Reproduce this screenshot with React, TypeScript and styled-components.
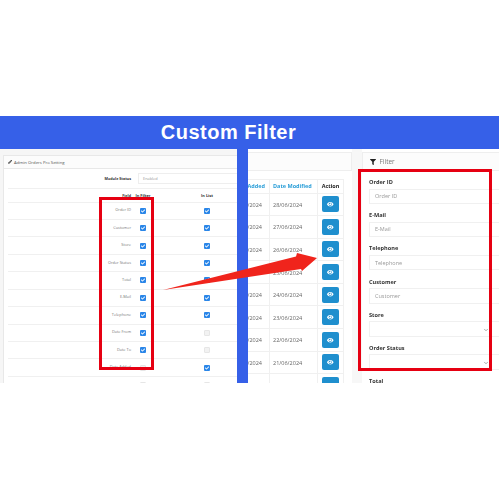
import React from "react";
import styled, { createGlobalStyle } from "styled-components";
import { FaEye, FaFilter, FaPencilAlt, FaCheck } from "react-icons/fa";
import { FiChevronDown } from "react-icons/fi";

const Global = createGlobalStyle`
  html, body { margin: 0; padding: 0; background: #fff; }
  body { font-family: "Open Sans", "Liberation Sans", sans-serif; }
`;

const Page = styled.div`
  width: 499px;
  height: 500px;
  padding-top: 116px;
  box-sizing: border-box;
  overflow: hidden;
  display: flex;
  flex-direction: column;
`;

const Banner = styled.div`
  height: 33px;
  flex: none;
  background: #3660e8;
  color: #fff;
  font: 700 20px/32px "Liberation Sans", Arial, sans-serif;
  letter-spacing: 0.5px;
  text-align: center;
  padding-right: 42px;
  box-sizing: border-box;
`;

const Stage = styled.div`
  position: relative;
  height: 234px;
  flex: none;
  display: flex;
  overflow: hidden;
  background: #fff;
`;

const Blurred = styled.div`
  display: flex;
  width: 100%;
  filter: blur(0.35px);
`;

const LeftColumn = styled.section`
  width: 237px;
  flex: none;
  box-sizing: border-box;
  padding: 5.5px 0 0 3px;
  background: #f6f6f6;
`;

const Panel = styled.div`
  background: #fff;
  border: 1px solid #e8e8e8;
  border-bottom: 0;
  border-right: 0;
  height: 100%;
`;

const PanelHead = styled.div`
  height: 13px;
  box-sizing: border-box;
  display: flex;
  align-items: center;
  gap: 2px;
  padding-left: 4px;
  font-size: 4.25px;
  color: #555;
  background: #fcfcfc;
  border-bottom: 1px solid #e8e8e8;
  svg { width: 4px; height: 4px; color: #333; }
`;

const SettingRow = styled.div`
  height: 17.45px;
  box-sizing: border-box;
  display: grid;
  grid-template-columns: 123px 24px 40px 24px;
  align-items: center;
  margin-left: 4px;
  border-bottom: 1px solid #f0f0f0;
  font-size: 3.9px;
  color: #777;
`;

const StatusRow = styled(SettingRow)`
  height: 20px;
  grid-template-columns: 123px 1fr;
  column-gap: 7px;
`;

const HeadRow = styled(SettingRow)`
  height: 14px;
  color: #333;
  font-weight: 700;
`;

const FieldLabel = styled.span`
  text-align: right;
  white-space: nowrap;
  transform: translateY(-1.5px);
`;

const StrongLabel = styled(FieldLabel)`
  font-weight: 700;
  font-size: 3.7px;
  color: #333;
  transform: none;
`;

const StatusBox = styled.div`
  height: 11px;
  box-sizing: border-box;
  border: 1px solid #eee;
  border-right: 0;
  padding-left: 4px;
  line-height: 9px;
  color: #999;
`;

const CheckCell = styled.div<{ $col: number }>`
  grid-column: ${(p) => p.$col};
  justify-self: center;
  white-space: nowrap;
`;

const Box = styled.span<{ $on: boolean }>`
  display: flex;
  align-items: center;
  justify-content: center;
  width: 6px;
  height: 6px;
  border-radius: 1px;
  background: ${(p) => (p.$on ? "#2a86e8" : "#f2f2f2")};
  border: ${(p) => (p.$on ? "0" : "0.5px solid #e6e6e6")};
  box-sizing: border-box;
  color: #fff;
  svg { width: 4px; height: 4px; }
`;

const Divider = styled.div`
  width: 11px;
  flex: none;
  background: #3660e8;
`;

const MiddleColumn = styled.section`
  width: 104px;
  flex: none;
  box-sizing: border-box;
  padding-top: 3px;
`;

const TableHead = styled.div`
  height: 19px;
  background: #fcfcfc;
  border: 1px solid #eeeeee;
  border-left: 0;
  box-sizing: border-box;
`;

const Table = styled.div`
  margin-top: 7.5px;
  width: 96px;
  display: grid;
  grid-template-columns: 22px 48px 26px;
`;

const Cell = styled.div<{ $tall?: boolean }>`
  height: ${(p) => (p.$tall ? "15px" : "22.6px")};
  box-sizing: border-box;
  display: flex;
  align-items: center;
  justify-content: flex-end;
  overflow: hidden;
  white-space: nowrap;
  font-size: 5.5px;
  color: #666;
  padding-right: 7px;
  padding-top: 1px;
  border-bottom: 1px solid #f0f0f0;
  border-right: 1px solid #f0f0f0;
  border-top: ${(p) => (p.$tall ? "1px solid #f0f0f0" : "0")};
`;

const DateCell = styled(Cell)`
  justify-content: flex-start;
  padding: 1px 0 0 3px;
`;

const HeadLink = styled(DateCell)`
  color: #2a9ed8;
  font-weight: 700;
  padding-top: 0;
`;

const ClipHead = styled(Cell)`
  color: #2a9ed8;
  font-weight: 700;
  padding: 0 4px 0 0;
`;

const ActionHead = styled(Cell)`
  justify-content: center;
  color: #222;
  font-weight: 700;
  padding: 0;
`;

const ActionCell = styled(Cell)`
  justify-content: center;
  padding: 0;
`;

const EyeButton = styled.span`
  width: 17px;
  height: 16px;
  border-radius: 2px;
  background: #1f8fce;
  color: #fff;
  display: flex;
  align-items: center;
  justify-content: center;
  svg { width: 6.5px; height: 6.5px; }
`;

const Gutter = styled.div`
  width: 10px;
  flex: none;
  background: #f7f7f7;
`;

const FilterColumn = styled.section`
  flex: 1;
  min-width: 0;
  padding-top: 3px;
  background: #fff;
`;

const FilterHead = styled.div`
  height: 19px;
  display: flex;
  align-items: center;
  gap: 3.5px;
  padding-left: 7px;
  font-size: 6.5px;
  color: #777;
  background: #fcfcfc;
  border: 1px solid #eee;
  border-right: 0;
  box-sizing: border-box;
  svg { width: 6px; height: 6px; color: #222; }
`;

const FilterBody = styled.div`
  padding: 7px 0 0 7px;
  display: flex;
  flex-direction: column;
`;

const FilterField = styled.div`
  height: 33.2px;
  flex: none;
`;

const FieldName = styled.div`
  font-size: 5.6px;
  line-height: 8px;
  height: 10.5px;
  font-weight: 700;
  color: #333;
`;

const FakeInput = styled.div`
  height: 15.5px;
  box-sizing: border-box;
  border: 1px solid #f0f0f0;
  border-right: 0;
  padding-left: 5px;
  font-size: 5.5px;
  color: #999;
  display: flex;
  align-items: center;
  justify-content: space-between;
  svg { width: 6px; height: 6px; color: #555; margin-right: 10px; margin-top: 2px; }
`;

const RedFrame = styled.div<{ $l: number; $t: number; $w: number; $h: number }>`
  position: absolute;
  left: ${(p) => p.$l}px;
  top: ${(p) => p.$t}px;
  width: ${(p) => p.$w}px;
  height: ${(p) => p.$h}px;
  box-sizing: border-box;
  border: 3px solid #e60012;
`;

const Arrow = styled.svg`
  position: absolute;
  left: 0;
  top: 0;
  width: 499px;
  height: 234px;
  pointer-events: none;
`;

const fields: [string, boolean, boolean][] = [
  ["Order ID", true, true],
  ["Customer", true, true],
  ["Store", true, true],
  ["Order Status", true, true],
  ["Total", true, true],
  ["E-Mail", true, true],
  ["Telephone", true, true],
  ["Date From", true, false],
  ["Date To", true, false],
  ["Date Added", false, true],
  ["Date Modified", false, false],
];

const dates = ["28", "27", "26", "25", "24", "23", "22", "21", "20"];

const filters: [string, boolean][] = [
  ["Order ID", false],
  ["E-Mail", false],
  ["Telephone", false],
  ["Customer", false],
  ["Store", true],
  ["Order Status", true],
  ["Total", false],
];

export default function App() {
  return (
    <Page>
      <Global />
      <Banner>Custom Filter</Banner>
      <Stage>
        <Blurred>
          <LeftColumn>
            <Panel>
              <PanelHead>
                <FaPencilAlt />
                Admin Orders Pro Setting
              </PanelHead>
              <StatusRow>
                <StrongLabel>Module Status</StrongLabel>
                <StatusBox>Enabled</StatusBox>
              </StatusRow>
              <HeadRow>
                <StrongLabel>Field</StrongLabel>
                <CheckCell $col={2}>In Filter</CheckCell>
                <CheckCell $col={4}>In List</CheckCell>
              </HeadRow>
              {fields.map(([name, inFilter, inList]) => (
                <SettingRow key={name}>
                  <FieldLabel>{name}</FieldLabel>
                  <CheckCell $col={2}>
                    <Box $on={inFilter}>{inFilter && <FaCheck />}</Box>
                  </CheckCell>
                  <CheckCell $col={4}>
                    <Box $on={inList}>{inList && <FaCheck />}</Box>
                  </CheckCell>
                </SettingRow>
              ))}
            </Panel>
          </LeftColumn>
          <Divider />
          <MiddleColumn>
            <TableHead />
            <Table>
              <ClipHead $tall>Date Added</ClipHead>
              <HeadLink $tall>Date Modified</HeadLink>
              <ActionHead $tall>Action</ActionHead>
              {dates.map((d) => (
                <React.Fragment key={d}>
                  <Cell>{d}/06/2024</Cell>
                  <DateCell>{d}/06/2024</DateCell>
                  <ActionCell>
                    <EyeButton>
                      <FaEye />
                    </EyeButton>
                  </ActionCell>
                </React.Fragment>
              ))}
            </Table>
          </MiddleColumn>
          <Gutter />
          <FilterColumn>
            <FilterHead>
              <FaFilter />
              Filter
            </FilterHead>
            <FilterBody>
              {filters.map(([name, select]) => (
                <FilterField key={name}>
                  <FieldName>{name}</FieldName>
                  <FakeInput>
                    {select ? <span /> : name}
                    {select && <FiChevronDown />}
                  </FakeInput>
                </FilterField>
              ))}
            </FilterBody>
          </FilterColumn>
        </Blurred>
        <RedFrame $l={99} $t={48} $w={55} $h={173} />
        <RedFrame $l={358} $t={20} $w={134} $h={202} />
        <Arrow viewBox="0 0 499 234">
          <polygon points="163,141 296,107.5 297,104 317,109 302,122 301,120" fill="#f0241c" />
        </Arrow>
      </Stage>
    </Page>
  );
}
